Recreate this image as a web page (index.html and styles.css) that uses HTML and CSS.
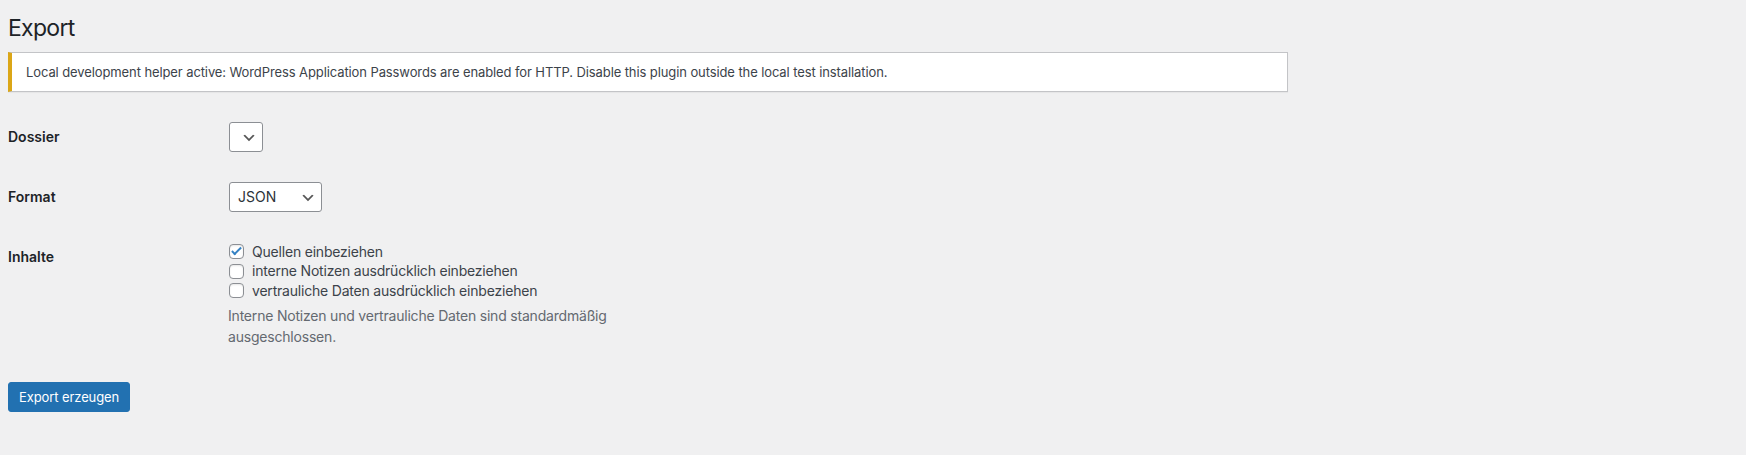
FILE: index.html
```html
<!DOCTYPE html>
<html lang="de">
<head>
<meta charset="utf-8">
<title>Export</title>
<link rel="stylesheet" href="styles.css">
</head>
<body>
<div class="wrap">
  <h1 class="page-title">Export</h1>
  <div class="notice notice-warning">
    <p>Local development helper active: WordPress Application Passwords are enabled for HTTP. Disable this plugin outside the local test installation.</p>
  </div>
  <form class="export-form">
    <div class="form-row">
      <label class="form-label" for="dossier">Dossier</label>
      <div class="form-field">
        <span class="select-wrap">
          <select id="dossier" class="select select-dossier"><option value=""></option></select>
          <svg class="chevron" viewBox="0 0 20 20" aria-hidden="true"><path d="M5 6l5 5 5-5 2 1-7 7-7-7 2-1z"/></svg>
        </span>
      </div>
    </div>
    <div class="form-row">
      <label class="form-label" for="format">Format</label>
      <div class="form-field">
        <span class="select-wrap">
          <select id="format" class="select select-format">
            <option value="json" selected>JSON</option>
            <option value="markdown">Markdown</option>
          </select>
          <svg class="chevron" viewBox="0 0 20 20" aria-hidden="true"><path d="M5 6l5 5 5-5 2 1-7 7-7-7 2-1z"/></svg>
        </span>
      </div>
    </div>
    <div class="form-row">
      <div class="form-label">Inhalte</div>
      <div class="form-field">
        <fieldset class="checks">
          <label class="check"><input type="checkbox" checked> <span>Quellen einbeziehen</span></label>
          <label class="check"><input type="checkbox"> <span>interne Notizen ausdrücklich einbeziehen</span></label>
          <label class="check"><input type="checkbox"> <span>vertrauliche Daten ausdrücklich einbeziehen</span></label>
        </fieldset>
        <p class="description">Interne Notizen und vertrauliche Daten sind standardmäßig ausgeschlossen.</p>
      </div>
    </div>
    <p class="submit"><button type="button" class="button-primary">Export erzeugen</button></p>
  </form>
</div>
</body>
</html>
```
FILE: styles.css
```css
html, body {
  margin: 0;
  padding: 0;
  background: #f0f0f1;
}

body {
  font-family: Inter, "Liberation Sans", Arial, sans-serif;
  font-size: 13px;
  letter-spacing: -0.1px;
  color: #3c434a;
}

.wrap {
  max-width: 1280px;
  padding-left: 8px;
}

.page-title {
  margin: 0;
  padding: 13px 0 4px;
  font-size: 23px;
  font-weight: 400;
  line-height: 30px;
  letter-spacing: -0.7px;
  color: #1d2327;
}

.notice {
  margin: 5px 0 15px;
  padding: 9px 14px;
  background: #fff;
  border: 1px solid #c3c4c7;
  border-left: 4px solid #dba617;
  box-shadow: 0 1px 1px rgba(0, 0, 0, 0.04);
}

.notice p {
  margin: 0;
  font-size: 13px;
  line-height: 20px;
  color: #3c434a;
}

.export-form {
  margin: 0;
}

.form-row {
  display: grid;
  grid-template-columns: 210px 1fr;
}

.form-label {
  padding: 21px 10px 20px 0;
  font-size: 14px;
  font-weight: 600;
  line-height: 18px;
  letter-spacing: 0;
  color: #1d2327;
}

.form-field {
  display: flex;
  flex-direction: column;
  align-items: flex-start;
  padding: 15px 10px;
  font-size: 14px;
  line-height: 1.3;
  letter-spacing: -0.2px;
}

.select-wrap {
  position: relative;
  display: block;
  margin-left: 1px;
  height: 30px;
}

.select {
  -webkit-appearance: none;
  appearance: none;
  box-sizing: border-box;
  display: block;
  height: 30px;
  margin: 0;
  padding: 0 24px 0 8px;
  font-family: Inter, "Liberation Sans", Arial, sans-serif;
  font-size: 14px;
  line-height: 28px;
  letter-spacing: 0;
  color: #2c3338;
  background: #fff;
  border: 1px solid #8c8f94;
  border-radius: 3px;
}

.select-dossier {
  width: 34px;
}

.select-format {
  width: 93px;
}

.chevron {
  position: absolute;
  right: 6px;
  top: 8px;
  width: 16px;
  height: 16px;
  fill: #555;
  pointer-events: none;
}

.checks {
  margin: 0;
  padding: 0;
  border: 0;
}

.check {
  display: flex;
  align-items: center;
  gap: 8px;
  height: 19.5px;
  color: #3c434a;
}

.check input {
  -webkit-appearance: none;
  appearance: none;
  box-sizing: border-box;
  width: 15px;
  height: 15px;
  margin: 0 0 0 1px;
  padding: 0;
  background: #fff;
  border: 1px solid #8c8f94;
  border-radius: 4px;
  box-shadow: inset 0 1px 2px rgba(0, 0, 0, 0.1);
  flex: none;
}

.check input:checked::before {
  content: "";
  display: block;
  box-sizing: border-box;
  width: 5px;
  height: 10px;
  margin: 0 0 0 4px;
  border: solid #3582c4;
  border-width: 0 2.5px 2.5px 0;
  transform: rotate(45deg);
}

.description {
  max-width: 420px;
  margin: 4px 0 0;
  font-size: 14px;
  line-height: 21px;
  color: #646970;
}

.submit {
  margin: 20px 0 0;
  padding: 0;
}

.button-primary {
  box-sizing: border-box;
  min-height: 30px;
  margin: 0;
  padding: 0 10px;
  font-family: Inter, "Liberation Sans", Arial, sans-serif;
  font-size: 13px;
  line-height: 28px;
  letter-spacing: -0.1px;
  color: #fff;
  background: #2271b1;
  border: 1px solid #2271b1;
  border-radius: 3px;
  cursor: pointer;
}
```
